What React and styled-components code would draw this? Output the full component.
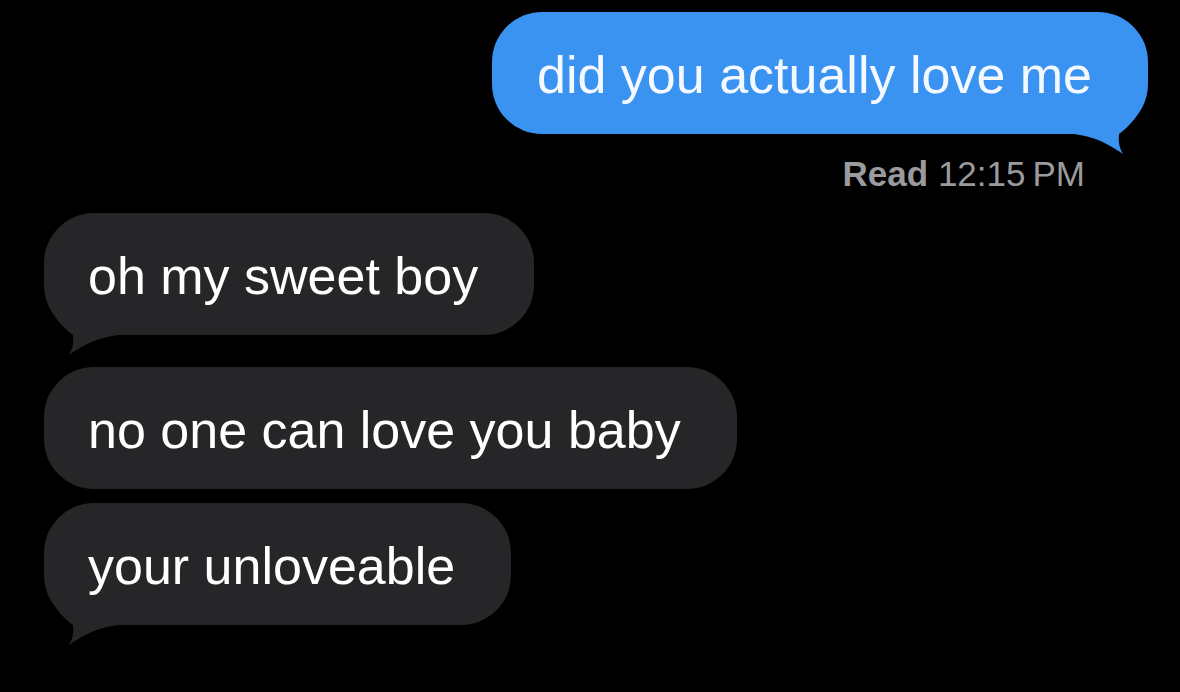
import styled, { createGlobalStyle } from "styled-components";

const GlobalStyle = createGlobalStyle`
  html, body {
    margin: 0;
    padding: 0;
    background: #000;
  }
  body {
    font-family: "Liberation Sans", Arial, sans-serif;
    -webkit-font-smoothing: antialiased;
  }
`;

const messages = [
  { id: 1, text: "oh my sweet boy", tail: true, gap: 0 },
  { id: 2, text: "no one can love you baby", tail: false, gap: 32 },
  { id: 3, text: "your unloveable", tail: true, gap: 14 },
];

// bubble tail, drawn for a left bubble and mirrored for the right one
const Tail = ({ color, side }) => (
  <TailSvg width="74" height="68" viewBox="0 0 74 68" $side={side}>
    <path
      d="M2 0 C4 24 18 38 29 46 C30 55 28 61 25 66 C34 60 48 50 68 47 L74 46 L74 0 Z"
      fill={color}
    />
  </TailSvg>
);

const App = () => {
  return (
    <>
      <GlobalStyle />
      <Thread>
        <OutRow>
          <Bubble $out>
            <Tail color="#3a93f1" side="right" />
            <Label>did you actually love me</Label>
          </Bubble>
        </OutRow>
        <ReadLine>
          <b>Read</b> 12:15&#8201;PM
        </ReadLine>
        <InGroup>
          {messages.map((m) => (
            <InRow key={m.id} $gap={m.gap}>
              <Bubble>
                {m.tail && <Tail color="#262629" side="left" />}
                <Label>{m.text}</Label>
              </Bubble>
            </InRow>
          ))}
        </InGroup>
      </Thread>
    </>
  );
};

export default App;

const Thread = styled.div`
  width: 1180px;
  height: 692px;
  box-sizing: border-box;
  padding: 12px 32px 0 44px;
  display: flex;
  flex-direction: column;
  background: #000;
  overflow: hidden;
`;

const OutRow = styled.div`
  display: flex;
  justify-content: flex-end;
`;

const Bubble = styled.div`
  position: relative;
  box-sizing: border-box;
  height: 122px;
  padding: 32px 56px 28px ${(p) => (p.$out ? "45px" : "44px")};
  border-radius: 50px;
  background: ${(p) => (p.$out ? "#3a93f1" : "#262629")};
  color: ${(p) => (p.$out ? "#f4f8ff" : "#ffffff")};
  font-size: 52px;
  line-height: 62px;
  white-space: nowrap;
`;

const Label = styled.span`
  position: relative;
  z-index: 1;
`;

const TailSvg = styled.svg`
  position: absolute;
  bottom: -22px;
  ${(p) => (p.$side === "right" ? "right: 0;" : "left: 0;")}
  transform: ${(p) => (p.$side === "right" ? "scaleX(-1)" : "none")};
  display: block;
`;

const ReadLine = styled.div`
  margin-top: 20px;
  margin-right: 63px;
  text-align: right;
  color: #9a9a9f;
  font-size: 35px;
  line-height: 40px;
  b {
    font-weight: 700;
  }
`;

const InGroup = styled.div`
  margin-top: 19px;
  display: flex;
  flex-direction: column;
`;

const InRow = styled.div`
  display: flex;
  margin-top: ${(p) => p.$gap}px;
`;
